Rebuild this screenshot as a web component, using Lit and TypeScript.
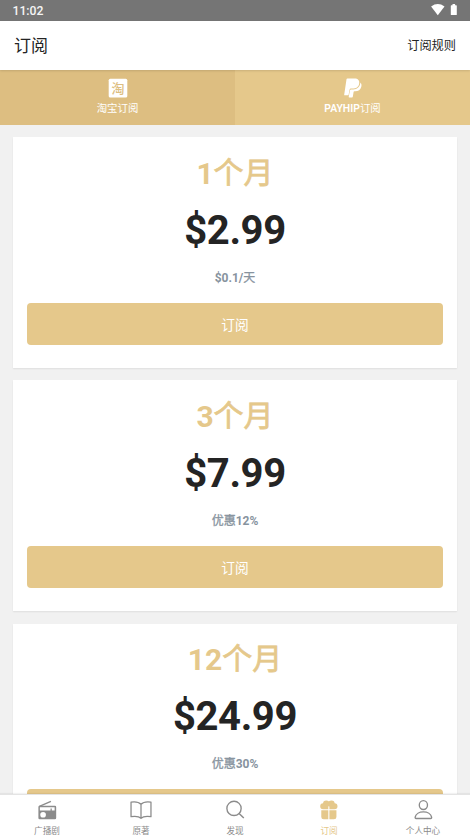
import { LitElement, html, css, svg, nothing } from "lit";
import { customElement, property } from "lit/decorators.js";
import { classMap } from "lit/directives/class-map.js";

interface Plan {
  count: string;
  price: string;
  note: unknown;
}

const cjk = (text: string) => html`<span class="cjk">${text}</span>`;

const plans: Plan[] = [
  { count: "1", price: "$2.99", note: html`$0.1/${cjk("天")}` },
  { count: "3", price: "$7.99", note: html`${cjk("优惠")}12%` },
  { count: "12", price: "$24.99", note: html`${cjk("优惠")}30%` },
];

const icons: Record<string, unknown> = {
  radio: svg`
    <path d="M3.2 6.600 15 1.400" stroke="currentColor" stroke-width="1.400" fill="none"/>
    <path fill="currentColor" fill-rule="evenodd" d="M3.500 5.800h15.600q1.300 0 1.300 1.300v11.400q0 1.300-1.300 1.300H3.500Q2.200 19.800 2.200 18.500V7.100Q2.200 5.800 3.500 5.800ZM3.700 7.300v3.500h10.900V8.800h1.300v2h2.900V7.300ZM7 12.200a2.900 2.900 0 1 0 0 5.800a2.900 2.900 0 0 0 0-5.800Z"/>`,
  book: svg`
    <path d="M11 4.300C9 2.200 5 1.500.8 2.100V17.100C5 16.500 9 16.800 11 18.700C13 16.800 17 16.500 21.200 17.100V2.100C17 1.500 13 2.200 11 4.300ZM11 4.300V18.700" fill="none" stroke="currentColor" stroke-width="1.300" stroke-linejoin="round"/>`,
  search: svg`
    <circle cx="10" cy="8.600" r="7.300" fill="none" stroke="currentColor" stroke-width="1.400"/>
    <path d="m15.200 13.800 4.800 4.600" fill="none" stroke="currentColor" stroke-width="1.500"/>`,
  gift: svg`
    <g fill="currentColor">
      <circle cx="8.200" cy="3.900" r="3.300"/>
      <circle cx="13.500" cy="3.900" r="3.300"/>
      <path d="M5 3.400H16.700A3 3 0 0 1 16.700 9.400H11.400V5.600H10.300V9.400H5A3 3 0 0 1 5 3.400Z"/>
      <path d="M3.100 10.500h7.200v9.300H5.600q-2.500 0-2.500-2.500ZM11.400 10.500h7.200v6.800q0 2.500-2.500 2.500h-4.700Z"/>
    </g>`,
  person: svg`
    <g fill="none" stroke="currentColor" stroke-width="1.400">
      <ellipse cx="11.400" cy="5.200" rx="4.200" ry="4.500"/>
      <path d="M3.900 18.900Q2.800 18.900 3 17.600C4.100 10.400 18.700 10.400 19.800 17.600Q20 18.900 18.900 18.900Z"/>
    </g>`,
};

@customElement("nav-item")
class NavItem extends LitElement {
  @property() icon = "";
  @property() label = "";
  static styles = css`
    :host { display: flex; flex-direction: column; align-items: center; flex: 1; padding-top: 4.500px; }
    svg { width: 22px; height: 22px; display: block; }
    .label { font-size: 8.600px; line-height: 12px; margin-top: 4px; white-space: nowrap; }
  `;
  render() {
    return html`<svg viewBox="0 0 22 22">${icons[this.icon] ?? nothing}</svg>
      <span class="label">${this.label}</span>`;
  }
}

@customElement("plan-card")
class PlanCard extends LitElement {
  @property({ attribute: false }) plan!: Plan;
  static styles = css`
    :host {
      display: flex; flex-direction: column; flex: none; box-sizing: border-box;
      height: 231px; padding: 16.500px 14px 0; background: #fff; text-align: center;
      box-shadow: 0 1px 1.500px rgba(0, 0, 0, 0.08);
    }
    .term { font-size: 30px; font-weight: 700; line-height: 40px; color: #e5c88b; }
    .price { margin-top: 13px; font-size: 40px; font-weight: 700; line-height: 48px; color: #242424; letter-spacing: -0.400px; }
    .note { margin-top: 15.200px; font-size: 12px; font-weight: 700; line-height: 16px; color: #87939e; }
    .cjk { font-weight: 400; -webkit-text-stroke: 0.025em currentColor; }
    .term .cjk { position: relative; top: -1px; }
    .buy {
      margin: 16.900px 0 0; padding: 0; height: 42.500px; border: 0; border-radius: 4px;
      background: #e5c88b; color: #fff; font: inherit; font-size: 13.700px;
    }
  `;
  render() {
    const { count, price, note } = this.plan;
    return html`
      <div class="term">${count}${cjk("个月")}</div>
      <div class="price">${price}</div>
      <div class="note">${note}</div>
      <button class="buy">订阅</button>`;
  }
}

@customElement("app-root")
class AppRoot extends LitElement {
  static styles = css`
    :host {
      display: flex; flex-direction: column; height: 837px; overflow: hidden;
      background: #f1f1f1; color: #242424;
      font-family: Roboto, "Noto Sans CJK SC", sans-serif;
    }
    .status {
      flex: none; display: flex; align-items: center; height: 21px; box-sizing: border-box;
      padding: 0 12px 0 12.500px; background: #757575; color: #f5f5f5;
      font-size: 12.200px; font-weight: 500;
    }
    .status svg { display: block; height: 21px; width: 30px; margin-left: auto; }
    .header {
      flex: none; display: flex; align-items: center; justify-content: space-between;
      height: 49px; box-sizing: border-box; padding: 0 14px 2px; background: #fff; z-index: 1;
      box-shadow: 0 1px 2px rgba(0, 0, 0, 0.12);
    }
    .title { font-size: 17px; }
    .rules { font-size: 12.200px; }
    .tabs { flex: none; display: flex; height: 55px; }
    .tab {
      flex: 1; display: flex; flex-direction: column; align-items: center; padding-top: 8px;
      background: #e5c88b; color: #fff; font-size: 10.400px; line-height: 14px;
    }
    .tab.active { background: #ddbe81; }
    .tab b { font-weight: 600; }
    .tab svg { width: 20px; height: 20px; display: block; margin-bottom: 4px; }
    .plans {
      flex: 1; min-height: 0; overflow: hidden; display: flex; flex-direction: column;
      gap: 12.200px; padding: 12.200px 13px 0;
    }
    .nav {
      flex: none; display: flex; height: 43px; box-sizing: border-box; background: #fff;
      color: #8b8b8b; border-top: 1px solid #e4e4e4; z-index: 1;
      box-shadow: 0 -1px 1px rgba(0, 0, 0, 0.05);
    }
    .current { color: #e5c88b; }
    .mark { font-size: 13px; font-weight: 500; fill: #ddbe81; }
  `;

  render() {
    const nav = [
      ["radio", "广播剧"], ["book", "原著"], ["search", "发现"],
      ["gift", "订阅"], ["person", "个人中心"],
    ];
    return html`
      <div class="status">
        <span>11:02</span>
        <svg viewBox="0 0 30 21" fill="#fff">
          <path d="M3.100 6.500Q9.800 1.700 16.500 6.500L9.800 15.200Z"/>
          <path d="M24.500 4h2.600v1.200h1.100q.6 0 .6.600v8.600q0 .6-.6.600h-4.800q-.6 0-.6-.6V5.800q0-.6.6-.6h1.100Z"/>
        </svg>
      </div>
      <header class="header">
        <span class="title">订阅</span><span class="rules">订阅规则</span>
      </header>
      <div class="tabs">
        <div class="tab active">
          <svg viewBox="0 0 20 20">
            <rect x=".7" y=".7" width="18.600" height="18.800" rx="1.600" fill="#fff"/>
            <text class="mark" x="10" y="14.800" text-anchor="middle">淘</text>
          </svg>
          <span>淘宝订阅</span>
        </div>
        <div class="tab">
          <svg viewBox="0 0 20 20" fill="#fff">
            <path d="M4.400 0.500H11.400C15 .5 16.900 2.500 16.100 5.900C15.400 9.200 13 10.400 9.500 10.400H7.700Q6.900 10.400 6.700 11.200L5.500 17.300H1.700Q1.100 17.300 1.200 16.700L3.500 1.200Q3.600.5 4.400.5Z"/>
            <path d="M17.400 4.500C18.600 5.600 18.700 7.100 18.300 8.700C17.500 11.900 15.400 13.200 12.200 13.200H11.400Q10.700 13.200 10.600 13.900L9.800 18.700Q9.700 19.400 9 19.400H6.200Q5.600 19.400 5.700 18.800L7 12.200Q7.200 11.400 8 11.400H10.200C14.200 11.400 17.100 8.800 17.400 4.500Z"/>
          </svg>
          <span><b>PAYHIP</b>订阅</span>
        </div>
      </div>
      <main class="plans">${plans.map((p) => html`<plan-card .plan=${p}></plan-card>`)}</main>
      <nav class="nav">
        ${nav.map(([icon, label]) => html`<nav-item
          class=${classMap({ current: icon === "gift" })} icon=${icon} label=${label}></nav-item>`)}
      </nav>`;
  }
}
